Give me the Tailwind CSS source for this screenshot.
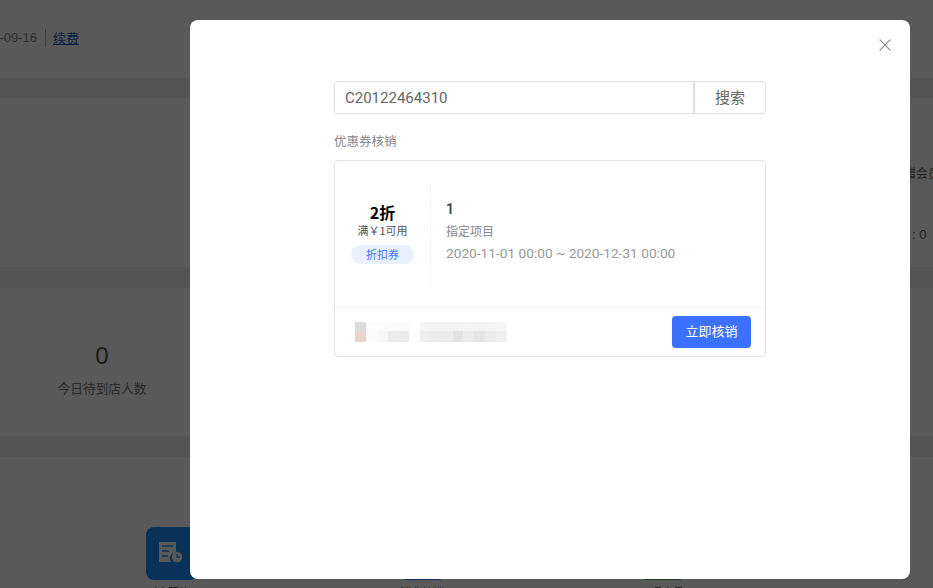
<!DOCTYPE html>
<html lang="zh-CN">
<head>
  <meta charset="UTF-8">
  <meta name="viewport" content="width=device-width, initial-scale=1.0">
  <title>优惠券核销</title>
  <script src="https://cdn.jsdelivr.net/npm/@tailwindcss/browser@4"></script>
</head>
<body class="h-[588px] overflow-hidden bg-[#f0f0f0] font-['Noto_Sans_CJK_SC','Noto_Sans',sans-serif] text-[#666]">
  <!-- page behind the dialog -->
  <main class="flex h-[588px] flex-col overflow-hidden">
    <header class="flex h-[78px] shrink-0 items-center bg-white pb-[2px] text-[13px]">
      <div class="flex w-[79px] items-center justify-end whitespace-nowrap">
        <span class="font-['Liberation_Sans'] text-[#888]">2021-09-16</span>
        <span class="ml-2 mr-[7px] h-[18px] w-px shrink-0 bg-[#bbbbbb]"></span>
        <a class="text-[#2a57c8] underline">续费</a>
      </div>
    </header>
    <section class="mt-5 h-[169px] shrink-0 whitespace-nowrap bg-white pl-[904px] pt-[67px] text-xs">
      <p>赠会员</p>
      <p class="ml-[8px] mt-[45px] font-['Liberation_Sans'] text-[13px]">: 0</p>
    </section>
    <section class="mt-[21px] flex h-[148px] shrink-0 bg-white">
      <div class="flex w-[204px] flex-col items-center pt-[52px]">
        <p class="font-['Liberation_Sans'] text-[24px] leading-8 text-[#555]">0</p>
        <p class="mt-[6px] text-[12.7px] text-[#777]">今日待到店人数</p>
      </div>
    </section>
    <section class="mt-[21px] grid flex-1 grid-cols-[254px_240px_100px] bg-white pl-[146px] pt-[70px]">
      <div>
        <div class="flex h-[53px] w-[52px] items-center justify-center rounded-lg bg-[#1f90ff]">
          <svg class="ml-[-3px] mt-[-4px]" width="25" height="22" viewBox="0 0 25 22" fill="#ffffff">
            <path d="M1 1h17v10.5a6 6 0 0 0-5 9.5H1z"/>
            <circle cx="19" cy="16" r="5.2"/>
            <path d="M4 5h11M4 10h7M4 15h6" stroke="#1f90ff" stroke-width="1.6"/>
            <path d="M19 13v3.2h3" fill="none" stroke="#1f90ff" stroke-width="1.2"/>
          </svg>
        </div>
        <p class="mt-1 text-[11px] text-[#333]">到店预约</p>
      </div>
      <div>
        <div class="h-[53px] w-[46px] rounded-lg bg-[#3f8cff]"></div>
        <p class="mt-1 text-[11px] text-[#333]">消费核销</p>
      </div>
      <div>
        <div class="h-[53px] w-[46px] rounded-lg bg-[#4caf50]"></div>
        <p class="mt-1 text-[11px] text-[#333]">开通会员</p>
      </div>
    </section>
  </main>

  <div class="fixed inset-0 bg-black/65"></div>

  <!-- dialog -->
  <div class="fixed left-[190px] top-5 h-[559px] w-[720px] rounded-lg bg-white px-[144px] pt-[61px]">
    <button class="absolute right-[19px] top-[19px] text-[#8c8c8c]">
      <svg class="block" width="12" height="12" viewBox="0 0 12 12" fill="none" stroke="currentColor" stroke-width="1.2"><path d="M.7.7l10.6 10.6M11.3.7L.7 11.3"/></svg>
    </button>

    <div class="flex h-[33px]">
      <div class="flex flex-1 items-center rounded-l border border-[#dcdfe6] pl-[10px] pt-px font-['Roboto'] text-[15px] text-[#666]">C20122464310</div>
      <button class="w-[72px] rounded-r border border-[#dcdfe6] pb-px text-[15px] text-[#666]">搜索</button>
    </div>

    <p class="mt-[17px] text-[12.5px] leading-[19px] text-[#888]">优惠券核销</p>

    <div class="mt-[10px] h-[197px] rounded border border-[#e3e3e8]">
      <div class="flex h-[147px] items-center border-b border-[#f4f4fa]">
        <div class="mb-[2px] flex w-[95px] flex-col items-center">
          <p class="mb-px text-[16px] font-bold leading-5 text-black">2折</p>
          <p class="text-[11px] leading-[14px] text-[#555]">满￥1可用</p>
          <span class="mt-2 flex h-[19px] w-[63px] items-center justify-center rounded-full bg-[#e9f0ff] text-[11px] text-[#3f74ff]">折扣券</span>
        </div>
        <div class="h-[100px] border-l border-dashed border-[#eeeeee]"></div>
        <div class="mb-[6px] flex flex-col pl-[15px]">
          <p class="font-['Roboto'] text-[14px] font-semibold leading-5 text-[#444]">1</p>
          <p class="mt-[2px] text-xs leading-5 text-[#888]">指定项目</p>
          <p class="mt-[2px] font-['Roboto'] text-[13.7px] leading-5 text-[#999]">2020-11-01 00:00 ~ 2020-12-31 00:00</p>
        </div>
      </div>
      <div class="flex h-[48px] items-center justify-between pl-5 pr-[14px]">
        <div class="mt-[-1px] grid grid-cols-[repeat(14,10.85px)] grid-rows-[9px_11px]">
          <i class="bg-[#dcdcdc]"></i><i class="bg-[#fdfdfd]"></i><i class="bg-[#fcfcfc]"></i><i class="bg-[#fafafa]"></i><i class="bg-[#fafafa]"></i><i class="bg-white"></i><i class="bg-[#f5f5f5]"></i><i class="bg-[#f3f3f3]"></i><i class="bg-[#f3f3f3]"></i><i class="bg-[#f3f3f3]"></i><i class="bg-[#f5f5f5]"></i><i class="bg-[#f3f3f3]"></i><i class="bg-[#f5f5f5]"></i><i class="bg-[#f7f7f7]"></i>
          <i class="bg-[#e8d5cd]"></i><i class="bg-[#fbfbfb]"></i><i class="bg-[#f8f8f8]"></i><i class="bg-[#ebebeb]"></i><i class="bg-[#ececec]"></i><i class="bg-[#fdfdfd]"></i><i class="bg-[#eeeeee]"></i><i class="bg-[#ebebeb]"></i><i class="bg-[#ececec]"></i><i class="bg-[#e3e3e3]"></i><i class="bg-[#ebebeb]"></i><i class="bg-[#e5e5e5]"></i><i class="bg-[#ebebeb]"></i><i class="bg-[#efefef]"></i>
        </div>
        <button class="h-[32px] w-[79px] rounded bg-[#3a72ff] pb-[2px] text-[13px] text-white">立即核销</button>
      </div>
    </div>
  </div>
</body>
</html>
